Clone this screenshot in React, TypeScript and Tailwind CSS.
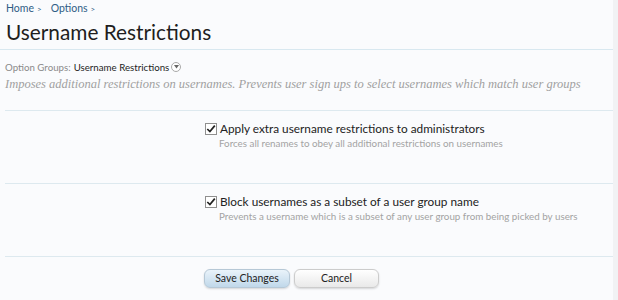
import React from 'react'

const OPTIONS = [
  {
    label: 'Apply extra username restrictions to administrators',
    hint: 'Forces all renames to obey all additional restrictions on usernames',
  },
  {
    label: 'Block usernames as a subset of a user group name',
    hint: 'Prevents a username which is a subset of any user group from being picked by users',
  },
]

const CheckBox = () => (
  <span className="flex h-[12px] w-[12px] shrink-0 items-center justify-center border border-[#8f8f8f] bg-white">
    <svg width="10" height="10" viewBox="0 0 10 10">
      <path d="M1.3 5 L3.9 7.6 L8.8 1.6" fill="none" stroke="#222" strokeWidth="1.7" />
    </svg>
  </span>
)

const App = () => {
  return (
    <div className="flex h-[300px] w-[618px] overflow-hidden bg-[#f1f2f4] font-['Lato',sans-serif]">
      <div className="w-[613px] bg-[#fafbfd]">
        <div className="pl-[6px] pt-[1px] text-[10.5px] leading-[14px] text-[#2f5d85]">
          <span>Home</span>
          <span className="ml-[3px] text-[8px]">&gt;</span>
          <span className="ml-[9px]">Options</span>
          <span className="ml-[3px] text-[8px]">&gt;</span>
        </div>
        <h1 className="pl-[6px] pt-[3px] text-[20.8px] leading-[26px] text-[#1e1e1e]">
          Username Restrictions
        </h1>
        <div className="mt-[4px] h-px bg-[#d8e8f0]" />

        <div className="mt-[10px] flex items-center pl-[5px] text-[9.7px] leading-[14px]">
          <span className="text-[#8a8a8a]">Option Groups:</span>
          <span className="ml-[3px] text-[#1e1e1e]">Username Restrictions</span>
          <span className="ml-[2px] flex h-[10px] w-[10px] items-center justify-center rounded-full border border-[#a9a9a9] bg-white">
            <svg width="5" height="4" viewBox="0 0 5 4">
              <path d="M0 0 H5 L2.5 3.5 Z" fill="#666" />
            </svg>
          </span>
        </div>
        <p className="mt-[2px] pl-[5px] font-['Liberation_Serif',serif] text-[12.5px] leading-[16px] italic text-[#a0a0a0]">
          Imposes additional restrictions on usernames. Prevents user sign ups to select usernames which match user groups
        </p>

        <div className="ml-[5px] mt-[18px] border-t border-[#dde9ef]">
          {OPTIONS.map((opt) => (
            <div key={opt.label} className="border-b border-[#dde9ef] pb-[33px] pl-[200px] pt-[10px]">
              <label className="flex items-center gap-[3px]">
                <CheckBox />
                <span className="text-[11.8px] leading-[16px] text-[#222]">{opt.label}</span>
              </label>
              <p className="pl-[14px] text-[9.8px] leading-[13px] text-[#a3a3a3]">{opt.hint}</p>
            </div>
          ))}
        </div>

        <div className="flex gap-[4px] pl-[204px] pt-[12px]">
          <button className="h-[19px] w-[86px] rounded-[6px] border border-[#b6c8d6] bg-gradient-to-b from-[#eaf3fa] to-[#c0d8ea] text-[10.5px] text-[#222] shadow-[0_1px_2px_rgba(0,0,0,0.15)]">
            Save Changes
          </button>
          <button className="h-[19px] w-[85px] rounded-[6px] border border-[#cccccc] bg-gradient-to-b from-[#ffffff] to-[#e9e9e9] text-[10.5px] text-[#222] shadow-[0_1px_2px_rgba(0,0,0,0.15)]">
            Cancel
          </button>
        </div>
      </div>
    </div>
  )
}

export default App
